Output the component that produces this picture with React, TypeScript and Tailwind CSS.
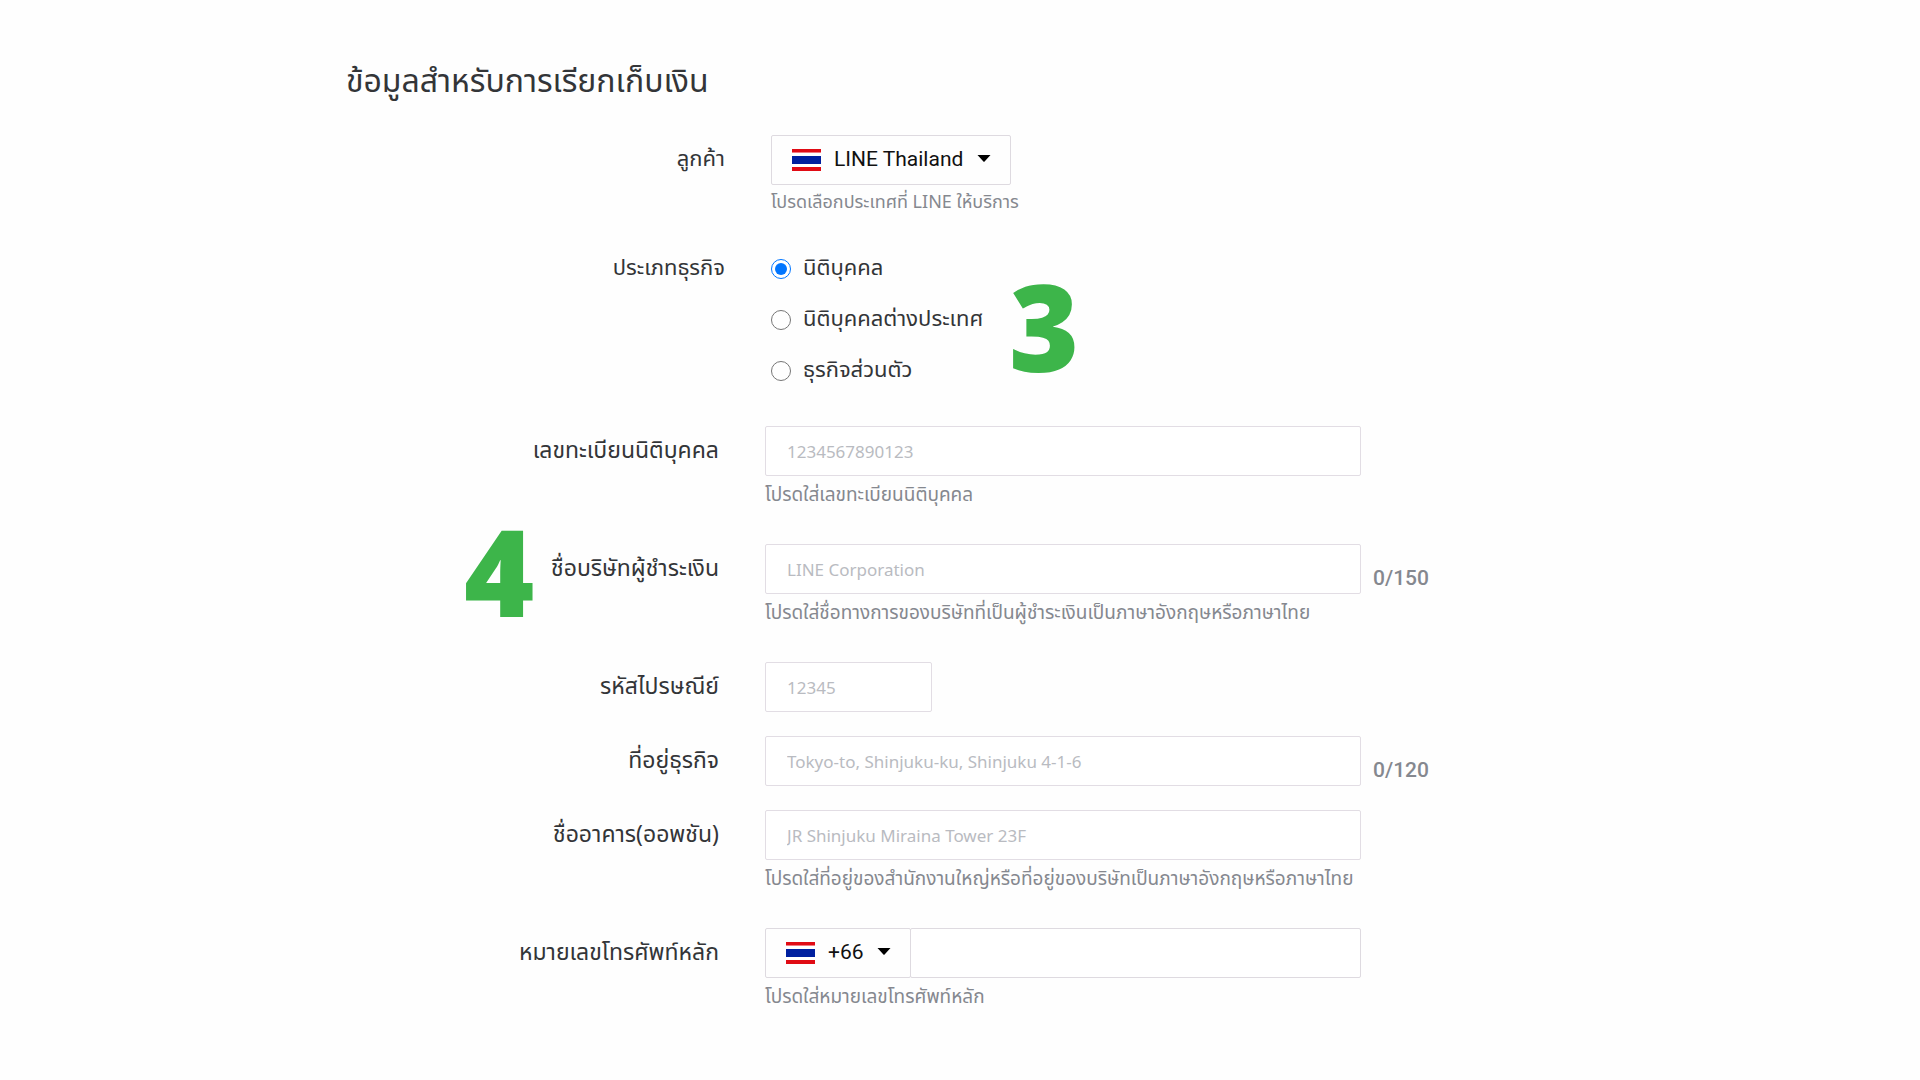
import type { ReactNode } from "react";

function ThaiFlag() {
  return (
    <svg width="29" height="22" viewBox="0 0 29 22" aria-hidden="true" className="pointer-events-none col-start-1 row-start-1 ml-[21px]">
      <rect width="29" height="22" fill="#fff" />
      <rect width="29" height="4" fill="#f27a80" />
      <rect width="29" height="3" fill="#e00b14" />
      <rect y="7" width="29" height="8" fill="#00209f" />
      <rect y="18" width="29" height="4" fill="#e00b14" />
    </svg>
  );
}

function Caret() {
  return (
    <svg width="14" height="7" viewBox="0 0 14 7" aria-hidden="true" className="pointer-events-none col-start-1 row-start-1 mr-5 mb-1 justify-self-end">
      <path d="M0.5 0h13L7.8 6.3a1 1 0 0 1-1.6 0Z" fill="#000" />
    </svg>
  );
}

function FlagSelect({ id, text, className, label }: { id: string; text: string; className: string; label?: string }) {
  return (
    <div className={"grid h-[50px] items-center " + className}>
      <select
        id={id}
        aria-label={label}
        className="col-start-1 row-start-1 h-full w-full appearance-none rounded-[2px] border border-[#dedae0] bg-transparent pl-[62px] font-['Roboto',sans-serif] text-[21px] text-[#111]"
      >
        <option>{text}</option>
      </select>
      <ThaiFlag />
      <Caret />
    </div>
  );
}

function Row({ id, label, help, badge, tight, children }: { id: string; label: string; help?: string; badge?: string; tight?: boolean; children: ReactNode }) {
  return (
    <div className={"relative flex gap-[46px] " + (tight ? "mb-6" : "mb-9")}>
      {badge && (
        <span className="absolute top-[-41px] left-[118px] font-['Open_Sans',sans-serif] text-[120px] leading-[136px] font-extrabold text-[#3db54a]">{badge}</span>
      )}
      <label htmlFor={id} className="h-[50px] w-[373px] shrink-0 text-right text-[23px] leading-[50px] whitespace-nowrap text-[#333538]">
        {label}
      </label>
      <div className="min-w-0 flex-1">
        {children}
        {help && <p className="mt-2 text-[19px] leading-6 whitespace-nowrap text-[#85888f]">{help}</p>}
      </div>
    </div>
  );
}

function TextField({ id, placeholder, short, max }: { id: string; placeholder?: string; short?: boolean; max?: number }) {
  return (
    <div className="flex items-end gap-3">
      <input
        id={id}
        type="text"
        placeholder={placeholder}
        className={
          "h-[50px] min-w-0 rounded-[2px] border border-[#e2dde4] bg-white px-[21px] font-['Noto_Sans',sans-serif] text-[17px] text-[#333538] placeholder:text-[#b9bbc1] " +
          (short ? "w-[167px]" : "w-[596px]")
        }
      />
      {max && <span className="font-['Roboto',sans-serif] text-[21px] leading-8 font-medium text-[#85888f]">0/{max}</span>}
    </div>
  );
}

const businessTypes = ["นิติบุคคล", "นิติบุคคลต่างประเทศ", "ธุรกิจส่วนตัว"];

export default function App() {
  return (
    <main className="min-h-screen bg-[#fefefe] font-['Noto_Sans_Thai','Noto_Sans',sans-serif]">
      <form className="mx-auto w-full max-w-[1228px] pt-[62px]">
        <h1 className="mb-[33px] text-[32px] leading-10 text-[#333538]">ข้อมูลสำหรับการเรียกเก็บเงิน</h1>

        <section className="mb-[30px] pl-[6px]">
          <div className="mb-7 flex gap-[46px]">
            <label htmlFor="country" className="w-[373px] shrink-0 text-right text-[22px] leading-[50px] text-[#333538]">
              ลูกค้า
            </label>
            <div>
              <FlagSelect id="country" text="LINE Thailand" className="w-[240px]" />
              <p className="mt-1.5 text-[18px] leading-6 whitespace-nowrap text-[#85888f]">โปรดเลือกประเทศที่ LINE ให้บริการ</p>
            </div>
          </div>
          <div role="radiogroup" aria-labelledby="business-type" className="flex gap-[46px]">
            <span id="business-type" className="w-[373px] shrink-0 text-right text-[22px] leading-[52px] text-[#333538]">
              ประเภทธุรกิจ
            </span>
            <div className="relative">
              {businessTypes.map((type, i) => (
                <label key={type} className="flex h-[51px] items-center gap-3 text-[22px] text-[#333538]">
                  <input type="radio" name="business-type" defaultChecked={i === 0} className="size-5 accent-[#0075ff]" />
                  {type}
                </label>
              ))}
              <span className="absolute top-[15px] left-[238px] font-['Open_Sans',sans-serif] text-[120px] leading-[136px] font-extrabold text-[#3db54a]">3</span>
            </div>
          </div>
        </section>

        <Row id="tax-id" label="เลขทะเบียนนิติบุคคล" help="โปรดใส่เลขทะเบียนนิติบุคคล">
          <TextField id="tax-id" placeholder="1234567890123" />
        </Row>
        <Row id="company" label="ชื่อบริษัทผู้ชำระเงิน" help="โปรดใส่ชื่อทางการของบริษัทที่เป็นผู้ชำระเงินเป็นภาษาอังกฤษหรือภาษาไทย" badge="4">
          <TextField id="company" placeholder="LINE Corporation" max={150} />
        </Row>
        <Row id="postcode" label="รหัสไปรษณีย์" tight>
          <TextField id="postcode" placeholder="12345" short />
        </Row>
        <Row id="address" label="ที่อยู่ธุรกิจ" tight>
          <TextField id="address" placeholder="Tokyo-to, Shinjuku-ku, Shinjuku 4-1-6" max={120} />
        </Row>
        <Row id="building" label="ชื่ออาคาร(ออพชัน)" help="โปรดใส่ที่อยู่ของสำนักงานใหญ่หรือที่อยู่ของบริษัทเป็นภาษาอังกฤษหรือภาษาไทย">
          <TextField id="building" placeholder="JR Shinjuku Miraina Tower 23F" />
        </Row>
        <Row id="phone" label="หมายเลขโทรศัพท์หลัก" help="โปรดใส่หมายเลขโทรศัพท์หลัก">
          <div className="flex w-[596px]">
            <FlagSelect id="phone-code" label="รหัสประเทศ" text="+66" className="w-[146px] shrink-0" />
            <input id="phone" type="tel" className="-ml-px h-[50px] min-w-0 flex-1 rounded-[2px] border border-[#dedae0] bg-white px-5 text-[20px]" />
          </div>
        </Row>
      </form>
    </main>
  );
}
